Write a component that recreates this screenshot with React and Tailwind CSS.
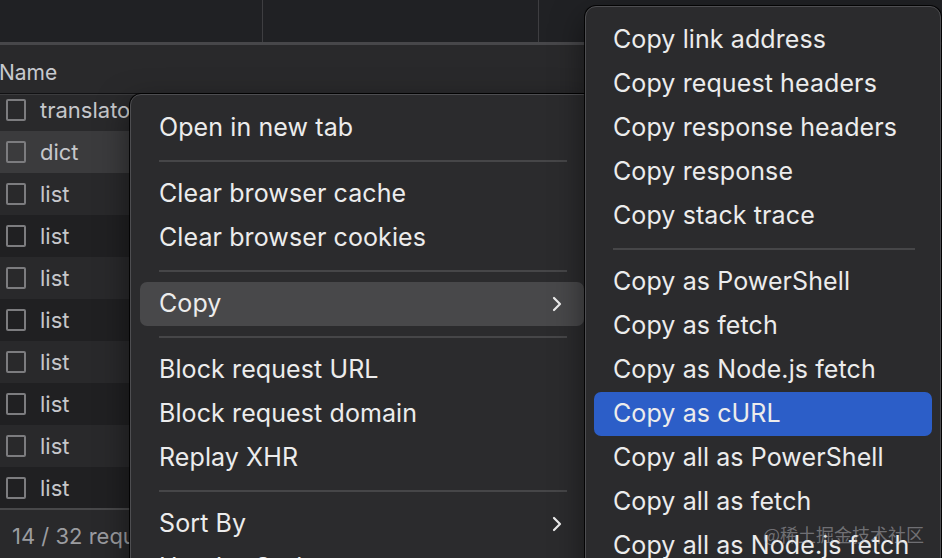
import React from "react";

const rows = ["translator", "dict", "list", "list", "list", "list", "list", "list", "list", "list"];

const mainMenu = [
  ["Open in new tab"],
  "sep",
  ["Clear browser cache"],
  ["Clear browser cookies"],
  "sep",
  ["Copy", "sub", "hover"],
  "sep",
  ["Block request URL"],
  ["Block request domain"],
  ["Replay XHR"],
  "sep",
  ["Sort By", "sub"],
  ["Header Options", "sub"],
];

const copyMenu = [
  ["Copy link address"],
  ["Copy request headers"],
  ["Copy response headers"],
  ["Copy response"],
  ["Copy stack trace"],
  "sep",
  ["Copy as PowerShell"],
  ["Copy as fetch"],
  ["Copy as Node.js fetch"],
  ["Copy as cURL", null, "active"],
  ["Copy all as PowerShell"],
  ["Copy all as fetch"],
  ["Copy all as Node.js fetch"],
];

const Chevron = () => (
  <svg width="10" height="16" viewBox="0 0 10 16" fill="none">
    <polyline points="2,2 8,8 2,14" stroke="#ececec" strokeWidth="2.2" strokeLinecap="round" strokeLinejoin="round" />
  </svg>
);

const MenuItems = ({ items }) =>
  items.map((item, i) => {
    if (item === "sep") {
      return (
        <div key={i} className="h-[22px] flex items-center">
          <div className="ml-[19px] mr-[17px] h-[2px] flex-1 bg-[#464648]" />
        </div>
      );
    }
    const [label, sub, state] = item;
    const bg =
      state === "hover" ? "bg-[#48484a]" : state === "active" ? "bg-[#2c5ec8]" : "";
    return (
      <div
        key={i}
        className={`h-[44px] flex items-center justify-between pl-[19px] pr-[22px] rounded-[7px] text-[25px] text-[#ececec] tracking-[0.1px] ${bg}`}
      >
        <span className="whitespace-nowrap">{label}</span>
        {sub && <Chevron />}
      </div>
    );
  });

export default function App() {
  return (
    <div className="relative w-[942px] h-[558px] overflow-hidden bg-[#222224] font-['Inter',sans-serif]">
      {/* top toolbar strip */}
      <div className="flex h-[45px] bg-[#202124] border-b-[3px] border-[#47474a]">
        <div className="w-[263px] border-r border-[#3e3e41]" />
        <div className="w-[276px] border-r border-[#3e3e41]" />
        <div className="flex-1" />
      </div>

      {/* Name header */}
      <div className="h-[49px] bg-[#29292b] flex items-center pt-[8px] border-b border-[#111113] text-[21px] text-[#c7c9cf] -ml-[1px]">
        Name
      </div>

      {/* request rows */}
      <div className="h-[414px] overflow-hidden border-t border-[#3c3c3e]">
        <div className="-mt-[6px]">
          {rows.map((name, i) => (
            <div
              key={i}
              className={`h-[42px] flex items-center ${
                i === 1 ? "bg-[#3b3b3d]" : i % 2 === 0 ? "bg-[#29292b]" : "bg-[#202022]"
              }`}
            >
              <div className="ml-[6px] w-[20px] h-[22px] border-2 border-[#7c7c7f] rounded-[2px]" />
              <span className="ml-[14px] text-[22px] text-[#c6c7cb]">{name}</span>
            </div>
          ))}
        </div>
      </div>

      {/* status bar */}
      <div className="h-[50px] border-t-2 border-[#48484a] bg-[#29292b] flex items-center pt-[5px] pl-[12px] text-[22px] text-[#9b9ca0]">
        14 / 32 requests
      </div>

      {/* main context menu */}
      <div className="absolute left-[130px] top-[94px] w-[464px] h-[520px] rounded-[11px] bg-[#2b2b2d] border border-[#4e4e51] shadow-[0_0_0_1px_rgba(0,0,0,0.85),0_12px_32px_rgba(0,0,0,0.5)] pt-[11px] px-[9px]">
        <MenuItems items={mainMenu} />
      </div>

      {/* copy submenu */}
      <div className="absolute left-[585px] top-[6px] w-[356px] h-[600px] rounded-[11px] bg-[#2b2b2d] border border-[#4e4e51] shadow-[0_0_0_1px_rgba(0,0,0,0.85),0_12px_32px_rgba(0,0,0,0.5)] pt-[11px] px-[8px]">
        <MenuItems items={copyMenu} />
      </div>

      {/* watermark */}
      <div className="absolute left-[763px] top-[521px] text-[18px] text-[rgba(200,200,205,0.45)] font-['Noto_Sans_CJK_SC',sans-serif] whitespace-nowrap">
        @稀土掘金技术社区
      </div>
    </div>
  );
}
